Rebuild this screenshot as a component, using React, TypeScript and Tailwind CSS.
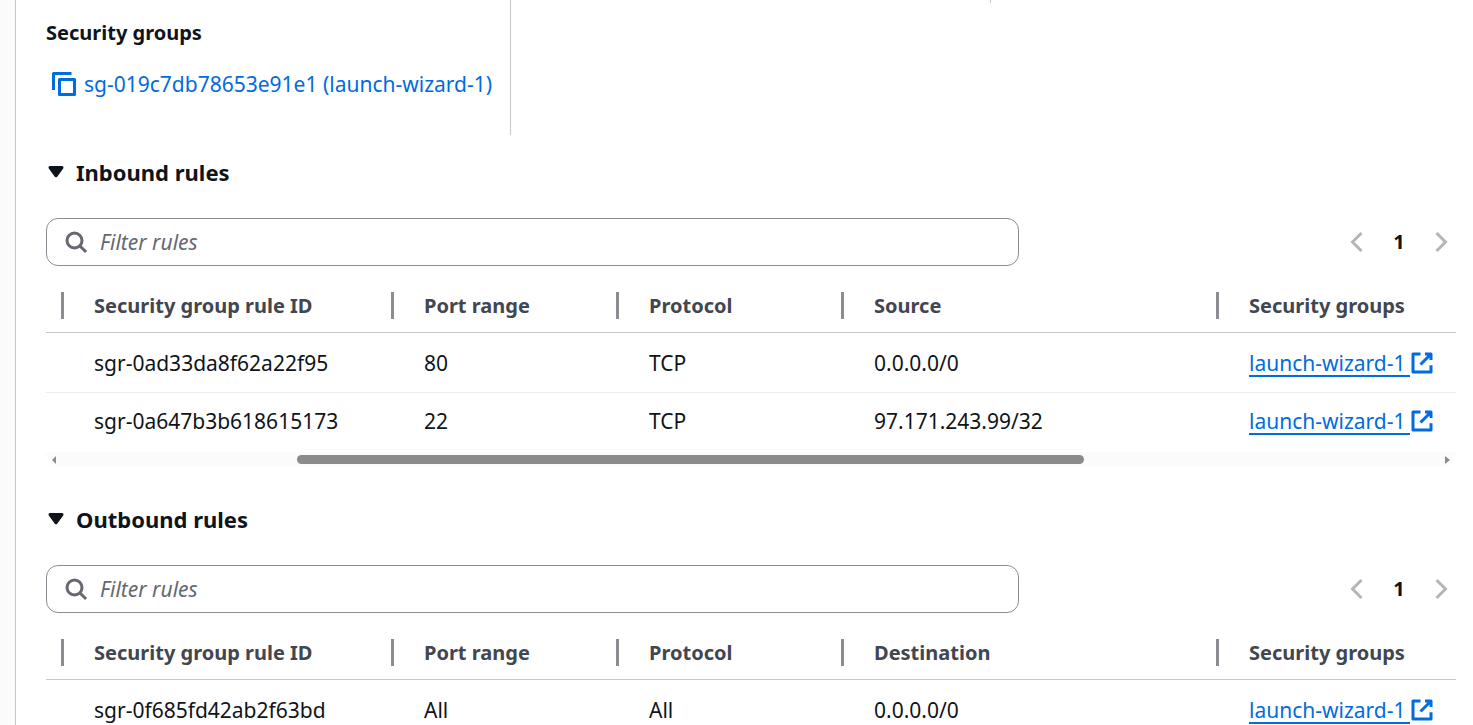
import { useId, type ReactNode } from "react";

type Rule = { id: string; port: string; protocol: string; peer: string; group: string };

const inbound: Rule[] = [
  { id: "sgr-0ad33da8f62a22f95", port: "80", protocol: "TCP", peer: "0.0.0.0/0", group: "launch-wizard-1" },
  { id: "sgr-0a647b3b618615173", port: "22", protocol: "TCP", peer: "97.171.243.99/32", group: "launch-wizard-1" },
];

const outbound: Rule[] = [
  { id: "sgr-0f685fd42ab2f63bd", port: "All", protocol: "All", peer: "0.0.0.0/0", group: "launch-wizard-1" },
];

function Icon({ children, className = "" }: { children: ReactNode; className?: string }) {
  return (
    <svg
      viewBox="0 0 16 16"
      className={`size-6 shrink-0 overflow-visible ${className}`}
      fill="none"
      stroke="currentColor"
      strokeWidth="2"
      aria-hidden="true"
    >
      {children}
    </svg>
  );
}

function HeaderCell({ children, last = false }: { children: ReactNode; last?: boolean }) {
  return (
    <th scope="col" className="p-0 font-bold">
      <div className="flex h-[27px] items-center justify-between pl-[30px]">
        <span className="whitespace-nowrap">{children}</span>
        {!last && <span className="h-full w-[3px] shrink-0 bg-[#8c8c94]" />}
      </div>
    </th>
  );
}

function Scrollbar() {
  return (
    <div className="mt-0.5 flex h-[15px] items-center rounded-b-2xl bg-[#fbfbfb] px-1.5" aria-hidden="true">
      <svg viewBox="0 0 4 8" className="h-2 w-1 shrink-0 fill-[#8b8b8b]">
        <path d="M4 0v8L0 4Z" />
      </svg>
      <div className="mr-0.5 ml-1.5 flex-1">
        <div className="ml-[17%] h-[9px] w-[57%] rounded-full bg-[#8b8b8b]" />
      </div>
      <svg viewBox="0 0 5 8" className="h-2 w-[5px] shrink-0 fill-[#8b8b8b]">
        <path d="M0 0v8l5-4Z" />
      </svg>
    </div>
  );
}

function RulesSection({ title, peerLabel, rules }: { title: string; peerLabel: string; rules: Rule[] }) {
  const inputId = useId();
  return (
    <section>
      <h2 className="text-[22px] leading-[30px] font-bold">
        <button type="button" className="-ml-0.5 flex items-center gap-2" aria-expanded="true">
          <Icon>
            <path d="M4 5h8l-4 5.5Z" fill="currentColor" strokeLinejoin="round" />
          </Icon>
          {title}
        </button>
      </h2>

      <div className="mt-[31px] flex items-center justify-between">
        <div className="flex h-12 w-[69%] items-center gap-3 rounded-xl border border-[#8c8c94] pr-4 pl-[17px]">
          <label htmlFor={inputId} aria-label="Filter rules" className="text-[#656871]">
            <Icon>
              <circle cx="7" cy="7" r="5" />
              <path d="m10.5 10.5 4.2 4.2" />
            </Icon>
          </label>
          <input
            id={inputId}
            type="text"
            placeholder="Filter rules"
            className="min-w-0 flex-1 outline-none placeholder:text-[#656871] placeholder:italic placeholder:opacity-100"
          />
        </div>
        <div className="mr-[3px] flex items-center text-[#b4b4bb]">
          <button type="button" disabled aria-label="Previous page">
            <Icon>
              <path d="M11 2 5 8l6 6" />
            </Icon>
          </button>
          <button
            type="button"
            className="w-[60px] text-center text-[20px] leading-[30px] font-bold text-[#0f141a]"
            aria-current="page"
          >
            1
          </button>
          <button type="button" disabled aria-label="Next page">
            <Icon>
              <path d="m5 2 6 6-6 6" />
            </Icon>
          </button>
        </div>
      </div>

      <table className="mt-3.5 w-full table-fixed border-collapse text-left">
        <colgroup>
          <col className="w-[18px]" />
          <col className="w-[330px]" />
          <col className="w-[225px]" />
          <col className="w-[225px]" />
          <col className="w-[375px]" />
          <col />
        </colgroup>
        <thead className="text-[20px] leading-[30px] text-[#424650]">
          <tr className="h-[52px] border-b border-[#c6c6cd]">
            <td className="p-0">
              <div className="ml-auto h-[27px] w-[3px] bg-[#8c8c94]" />
            </td>
            <HeaderCell>Security group rule ID</HeaderCell>
            <HeaderCell>Port range</HeaderCell>
            <HeaderCell>Protocol</HeaderCell>
            <HeaderCell>{peerLabel}</HeaderCell>
            <HeaderCell last>Security groups</HeaderCell>
          </tr>
        </thead>
        <tbody>
          {rules.map((rule) => (
            <tr
              key={rule.id}
              className="h-[60px] border-b border-[#ebebf0] last:border-0 [&:first-child>td]:pt-0.5 [&:last-child:not(:first-child)]:h-[58px]"
            >
              <td className="p-0" />
              <td className="py-0 pr-4 pl-[30px]">{rule.id}</td>
              <td className="py-0 pr-4 pl-[30px]">{rule.port}</td>
              <td className="py-0 pr-4 pl-[30px]">{rule.protocol}</td>
              <td className="py-0 pr-4 pl-[30px]">{rule.peer}</td>
              <td className="py-0 pl-[30px]">
                <a href="#security-group" className="flex items-center text-[#006ce0]">
                  <span className="border-y-2 border-t-transparent border-b-current pr-1 leading-6 whitespace-nowrap">
                    {rule.group}
                  </span>
                  <Icon>
                    <path d="M10 2h4v4M7 9l7-7M14 9.5V14H2V2h5" strokeLinejoin="round" />
                  </Icon>
                </a>
              </td>
            </tr>
          ))}
        </tbody>
      </table>
      <Scrollbar />
    </section>
  );
}

export default function App() {
  return (
    <div className="flex h-screen overflow-hidden bg-[#fbfbfb] font-['Noto_Sans','Open_Sans',sans-serif] text-[21px] leading-[30px] text-[#0f141a]">
      <main className="ml-[15px] min-w-0 flex-1 border-l border-[#c6c6cd] bg-white pr-[17px] pl-[30px]">
        <div className="-mx-[15px] grid grid-cols-3">
          <div className="h-[135px] border-r border-[#c6c6cd] px-[15px] pt-[18px]">
            <h3 className="text-[20px] leading-[30px] font-bold">Security groups</h3>
            <div className="mt-[21px] flex items-center gap-2 pl-1.5 text-[#006ce0]">
              <button type="button" aria-label="Copy security group">
                <Icon>
                  <path d="M15 5H5v10h10V5Z" strokeLinejoin="round" />
                  <path d="M13 1H1v11" strokeLinejoin="round" />
                </Icon>
              </button>
              <a href="#security-group" className="whitespace-nowrap">
                sg-019c7db78653e91e1 (launch-wizard-1)
              </a>
            </div>
          </div>
          <div className="h-[3px] border-r border-[#c6c6cd]" />
        </div>

        <div className="mt-[22px] flex flex-col gap-[37px]">
          <RulesSection title="Inbound rules" peerLabel="Source" rules={inbound} />
          <RulesSection title="Outbound rules" peerLabel="Destination" rules={outbound} />
        </div>
      </main>
    </div>
  );
}
